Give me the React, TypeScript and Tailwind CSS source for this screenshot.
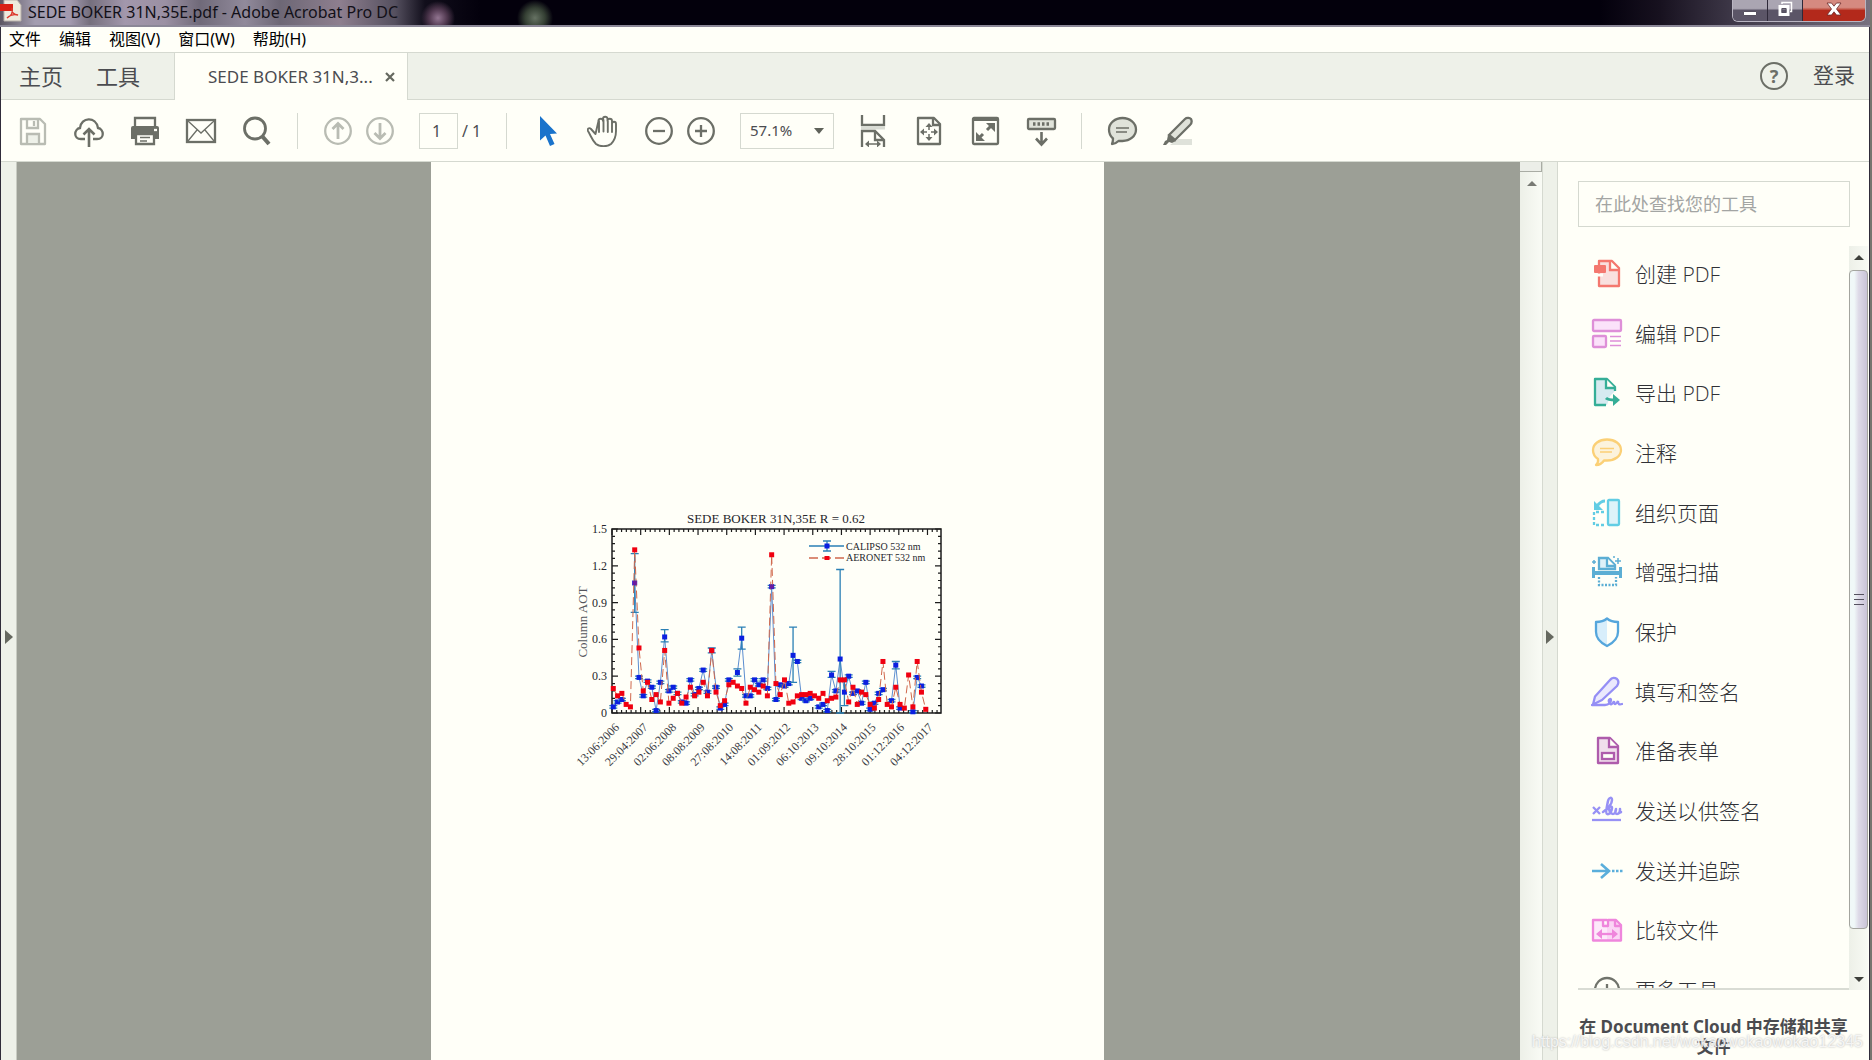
import type { ReactNode } from "react";

const MENUS = ["文件", "编辑", "视图(V)", "窗口(W)", "帮助(H)"];

function Icon({ children, className = "size-8" }: { children: ReactNode; className?: string }) {
  return (
    <svg viewBox="0 0 32 32" fill="none" stroke="currentColor" strokeWidth="2.300" className={`shrink-0 ${className}`} aria-hidden="true">
      {children}
    </svg>
  );
}

/* ---------- tool list ---------- */

const TOOLS = [
  {
    label: "创建 PDF",
    color: "text-[#f4786f]",
    icon: (
      <>
        <path d="M8 3h13l7 7v18H8z" fill="#f9e0de" strokeLinejoin="round" />
        <path d="M19 3v9h9" fill="#fffff8" />
        <path d="M6 17h6" stroke="#fffff8" strokeWidth="3" />
        <rect x="3" y="7" width="12" height="8" rx="1" fill="currentColor" stroke="none" />
      </>
    ),
  },
  {
    label: "编辑 PDF",
    color: "text-[#de8fd8]",
    icon: (
      <>
        <rect x="2" y="2" width="28" height="11" rx="1" fill="#fbe2fa" />
        <rect x="2" y="18" width="13" height="11" rx="1" fill="#fbe2fa" />
        <path d="M19 18.500h11M19 23h11M19 27.500h11" strokeWidth="1.300" />
      </>
    ),
  },
  {
    label: "导出 PDF",
    color: "text-[#35ae97]",
    icon: (
      <>
        <path d="M24 14v-4l-8-8H4v26h12l3-9z" fill="#d6eaf0" stroke="none" />
        <path d="M15 28H4V2h12l8 8v4" strokeLinejoin="round" />
        <path d="M15 2v9h9" fill="#fffff8" />
        <path d="M15 21c2 2 5 2 9 2" strokeWidth="3" />
        <path d="M22 17l7 6-7 6z" fill="currentColor" stroke="none" />
      </>
    ),
  },
  {
    label: "注释",
    color: "text-[#fbd076]",
    icon: (
      <>
        <path d="M16 2.500c8 0 14 4.500 14 10.500s-6 10.500-14 10.500h-3c-2 3-5 4.500-8 4.500 1.500-1.500 2.500-3.500 2-6C4 20 2 17 2 13 2 7 8 2.500 16 2.500z" fill="#fcf3dc" strokeLinejoin="round" />
        <path d="M9 11.500h14M9 15h12" strokeWidth="1.300" />
      </>
    ),
  },
  {
    label: "组织页面",
    color: "text-[#62cde4]",
    icon: (
      <>
        <rect x="17" y="3" width="11" height="25" rx="1" fill="#def3f9" />
        <path d="M13 15H3v13h11" strokeDasharray="3 2" />
        <path d="M14 4c-3 0-5 1-8 5" strokeWidth="3" />
        <path d="M3 4v9h9z" fill="currentColor" stroke="none" />
      </>
    ),
  },
  {
    label: "增强扫描",
    color: "text-[#5caed4]",
    icon: (
      <>
        <path d="M8 13V2h9l7 7v4z" fill="#dff1f8" />
        <path d="M16 2v8h8" fill="#fffff8" />
        <path d="M2.500 11v11M29.500 11v11" strokeWidth="3" />
        <path d="M2 17h28" strokeWidth="4" />
        <path d="M8 21v8h17v-8" strokeDasharray="2 1.500" />
        <path d="M1 6h4M3 4v4M24 5h6M27 2v6M22 1h2" strokeWidth="1.500" />
      </>
    ),
  },
  {
    label: "保护",
    color: "text-[#55a6dc]",
    icon: (
      <>
        <path d="M16 3C13 5 9 6 5 6v10c0 7 6 11 11 14z" fill="#d8eefb" stroke="none" />
        <path d="M16 2.500C13 5 9 6 5 6v10c0 6 5 11 11 14 6-3 11-8 11-14V6c-4 0-8-1-11-3.500z" strokeLinejoin="round" />
      </>
    ),
  },
  {
    label: "填写和签名",
    color: "text-[#958ff5]",
    icon: (
      <>
        <path d="M2 28.500l2-8L19 4c2-3 5-2.500 7-1 2 2 2 4 0 7L11 24z" fill="#ebe9fd" strokeLinejoin="round" />
        <path d="M1 29h13c4 0 6-3 6-5s-3-1-2 2c1 4 4 2 5-1 0 4 2 4 4 0 0 3 1 4 4 3" strokeLinecap="round" />
      </>
    ),
  },
  {
    label: "准备表单",
    color: "text-[#ae5cac]",
    icon: (
      <>
        <path d="M7 3h12l8 8v17H7z" fill="#f0dfec" strokeLinejoin="round" />
        <path d="M18 3v9h9" fill="#fffff8" />
        <rect x="11" y="18" width="12" height="6" fill="#fffff8" />
      </>
    ),
  },
  {
    label: "发送以供签名",
    color: "text-[#9791f5]",
    icon: (
      <>
        <path d="M2 12l7 7M9 12l-7 7" />
        <path
          d="M12 17c5-3 9-8 9-12 0-3-3-3-4 1-1 5-3 12-1 13s5-3 5-6c0-2-3-2-3 0 0 3 2 6 4 6s3-3 3-5c-1 3-1 5 1 5s3-2 3-5c0 3 0 4 1 3"
          strokeWidth="2.500"
          strokeLinecap="round"
          strokeLinejoin="round"
        />
        <path d="M1 25h29" />
      </>
    ),
  },
  {
    label: "发送并追踪",
    color: "text-[#5aaedb]",
    icon: (
      <>
        <path d="M1 16h17M10 9l8 7-8 7" strokeWidth="2.600" />
        <path d="M21 16h11" strokeDasharray="2.500 1.500" />
      </>
    ),
  },
  {
    label: "比较文件",
    color: "text-[#ef86dc]",
    icon: (
      <>
        <path d="M2 6h9l5 5v16H2z" fill="#fde9fa" stroke="none" />
        <path d="M16 6h8l6 6v15H16z" fill="#fbd5f5" stroke="none" />
        <path d="M2 6h10v6h5V6h8l5 5v15.500H2zM16 6h-4M24 6v6h6" strokeLinejoin="round" />
        <path d="M7 20h18" />
        <path d="M11 15l-6 5 6 5zM21 15l6 5-6 5z" fill="currentColor" stroke="none" />
      </>
    ),
  },
  {
    label: "更多工具",
    color: "text-[#70736b]",
    icon: (
      <>
        <circle cx="16" cy="16" r="12" />
        <path d="M16 10v12M10 16h12" />
      </>
    ),
  },
];

/* ---------- toolbar ---------- */

function ToolButton({ label, narrow, muted, children }: { label: string; narrow?: boolean; muted?: boolean; children: ReactNode }) {
  return (
    <button
      type="button"
      aria-label={label}
      className={`flex h-10 shrink-0 items-center justify-center ${narrow ? "w-[42px]" : "w-14"} ${muted ? "text-[#b9bcb3]" : "text-[#6c6f67]"}`}
    >
      <Icon>{children}</Icon>
    </button>
  );
}

function Divider() {
  return <div className="mx-3 h-9 w-px shrink-0 bg-[#d5d9d0]" />;
}

function Toolbar() {
  return (
    <div className="flex h-[62px] shrink-0 items-center border-b border-[#d5d9d0] pl-1">
      <ToolButton label="保存" muted>
        <path d="M4 4h19l5 5v20H4z" strokeLinejoin="round" />
        <path d="M10 4v9h11V4M17 6v5" />
        <path d="M10 28V19h12v9" fill="#eef1e9" />
      </ToolButton>
      <ToolButton label="上传">
        <path d="M12 24H8c-8 0-7-10-1-11C8 2 23 1 25 13c6 1 7 11-1 11h-4" />
        <path d="M16 32V15M10.500 19.500L16 14l5.500 5.500" strokeWidth="2.600" />
      </ToolButton>
      <ToolButton label="打印">
        <path d="M6 11V3h20v8" />
        <path d="M4 11h24a2 2 0 0 1 2 2v11H2V13a2 2 0 0 1 2-2z" fill="currentColor" stroke="none" />
        <path d="M7 19h18v10H7z" fill="#fffff8" />
        <path d="M11 22.500h10M11 26h7" strokeWidth="1.500" />
        <path d="M25 15h3" stroke="#fffff8" />
      </ToolButton>
      <ToolButton label="电子邮件">
        <rect x="2" y="5" width="28" height="22" />
        <path d="M3 6l13 12L29 6M3 26l9-11M29 26l-9-11" strokeWidth="1.300" />
      </ToolButton>
      <ToolButton label="查找">
        <circle cx="14" cy="13.500" r="10.500" strokeWidth="2.800" />
        <path d="M21 21l7 8" strokeWidth="4" />
      </ToolButton>
      <Divider />
      <div className="flex pl-[7px]">
        <ToolButton label="上一页" narrow muted>
          <circle cx="16" cy="16" r="12.800" />
          <path d="M16 24V9M10.500 14L16 8.500l5.500 5.500" strokeWidth="2.800" />
        </ToolButton>
        <ToolButton label="下一页" narrow muted>
          <circle cx="16" cy="16" r="12.800" />
          <path d="M16 8v15M10.500 18l5.500 5.500 5.500-5.500" strokeWidth="2.800" />
        </ToolButton>
      </div>
      <input
        aria-label="页码"
        defaultValue="1"
        className="ml-[18px] h-9 w-[39px] shrink-0 border border-[#d5d9d0] bg-transparent pr-1 text-center text-base text-[#4b4c50] outline-none"
      />
      <span className="w-9 shrink-0 pl-1 text-base">/ 1</span>
      <Divider />
      <button type="button" aria-label="选择" className="flex h-10 w-14 shrink-0 items-center justify-center text-[#1a73cb]">
        <Icon>
          <path d="M9 1v24.500l5.500-5 4.500 10.500 4.500-2-4.500-10 7-.500z" fill="currentColor" stroke="none" />
        </Icon>
      </button>
      <ToolButton label="手形工具">
        <path
          d="M8.500 19L4 14c-2-2-4 0-3 2 3 5 4 9 8 13 4 3 11 3 15 0 4-4 5-8 5-13V9c0-3-4-3-4 0V6c0-3-4.500-3-4.500 0V4c0-3-4.500-3-4.500 0v2c0-3-4.500-3-4.500 0zM12 6v11M16.500 5v11.500M20.800 6v11M25 9v8"
          strokeWidth="1.900"
          strokeLinejoin="round"
          strokeLinecap="round"
        />
      </ToolButton>
      <div className="flex pl-[7px]">
        <ToolButton label="缩小" narrow>
          <circle cx="16" cy="16" r="12.800" />
          <path d="M10 16h12" />
        </ToolButton>
        <ToolButton label="放大" narrow>
          <circle cx="16" cy="16" r="12.800" />
          <path d="M10 16h12M16 10v12" />
        </ToolButton>
      </div>
      <div className="relative ml-[18px] shrink-0">
        <select
          aria-label="缩放比例"
          className="h-9 w-[94px] appearance-none border border-[#d5d9d0] bg-transparent pl-[9px] text-[15px] text-[#4b4c50] outline-none"
        >
          <option>57.1%</option>
        </select>
        <svg viewBox="0 0 10 6" className="pointer-events-none absolute top-[15px] right-[10px] h-1.5 w-2.5 fill-[#5f625a]" aria-hidden="true">
          <path d="M0 0h10L5 6z" />
        </svg>
      </div>
      <div className="flex pl-[11px]">
        <ToolButton label="适合宽度">
          <path d="M5 0v10h22V0" />
          <path d="M4 13h24" stroke="#d9dcd4" strokeWidth="3" />
          <path d="M5 33V16h13l9 9v8" />
          <path d="M18 16v9h9" />
          <path d="M10 29h12" strokeWidth="1.500" />
          <path d="M12 25.500L8 29l4 3.500zM20 25.500l4 3.500-4 3.500z" fill="currentColor" stroke="none" />
        </ToolButton>
        <ToolButton label="适合页面">
          <path d="M5 3h16l6 6v20H5z" strokeLinejoin="round" />
          <path d="M20 3v7h7" />
          <path d="M16 10v5M16 19v5M9 17h5M18 17h5" strokeWidth="1.500" />
          <path d="M16 8l-3.500 4h7zM16 26l-3.500-4h7zM7 17l4-3.500v7zM25 17l-4-3.500v7z" fill="currentColor" stroke="none" />
        </ToolButton>
        <ToolButton label="全屏">
          <rect x="4" y="3" width="25" height="26" rx="1" />
          <path d="M4 4.500h25" strokeWidth="3" />
          <path d="M18 15l6-6M14 19l-6 6" strokeWidth="3" />
          <path d="M17 8h9v9zM7 17v9h9z" fill="currentColor" stroke="none" />
        </ToolButton>
        <ToolButton label="阅读模式">
          <rect x="3" y="4" width="27" height="10" rx="1" fill="#e0e3da" />
          <path d="M8 9h17" strokeWidth="3.500" strokeDasharray="2.500 2" />
          <path d="M16.500 17v12M11 23.500l5.500 6 5.500-6" strokeWidth="2.600" />
        </ToolButton>
      </div>
      <Divider />
      <ToolButton label="添加附注">
        <path d="M16.500 3C24 3 30 8 30 14.500S24 26 16.500 26c-1.500 0-3 0-4 0-2 2-4 3-6.500 3 1-2 1-3.500 1-5.500C4 21 3 18 3 14.500 3 8 9 3 16.500 3z" fill="#e0e3da" strokeLinejoin="round" />
        <path d="M10 13h13M10 17h11" strokeWidth="1.500" />
      </ToolButton>
      <ToolButton label="高亮文本">
        <path d="M8 30l8-6h14v6z" fill="#dfe2da" stroke="none" />
        <path d="M7 20L23 4c2-2 5-1 6 0 1 2 1 4-1 6L13 25z" fill="#e0e3da" />
        <path d="M6 20l8 6-4 2-3-1-3 3H1l2-4 2-1z" fill="currentColor" stroke="none" />
      </ToolButton>
    </div>
  );
}

/* ---------- chart ---------- */

const AERONET = [
  0.2, 0.14, 0.16, 0.07, 0.05, 1.33, 0.53, 0.18, 0.25, 0.11, 0.15, 0.09, 0.51, 0.08, 0.12, 0.16, 0.08, 0.13, 0.21, 0.14,
  0.17, 0.25, 0.14, 0.51, 0.17, 0.06, 0.1, 0.23, 0.25, 0.22, 0.2, 0.08, 0.21, 0.19, 0.17, 0.22, 0.14, 1.29, 0.24, 0.15,
  0.27, 0.08, 0.09, 0.14, 0.15, 0.15, 0.16, 0.14, 0.12, 0.16, 0.1, 0.12, 0.13, 0.27, 0.27, 0.09, 0.21, 0.07, 0.17, 0.15,
  0.07, 0.04, 0.11, 0.42, 0.07, 0.05, 0.21, 0.07, 0.04, 0.31, 0.05, 0.42, 0.17, 0.03,
];

const CALIPSO: (number | null)[] = [
  0.05, 0.09, 0.11, null, null, 1.06, 0.29, 0.14, 0.26, 0.21, 0.02, 0.25, 0.62, 0.18, 0.21, 0.16, 0.09, 0.08, 0.27, 0.15,
  0.2, 0.35, 0.17, 0.51, 0.21, 0.04, 0.07, 0.27, null, 0.33, 0.61, 0.14, 0.14, 0.27, 0.23, 0.27, 0.2, 1.03, 0.11, 0.23,
  0.22, 0.24, 0.47, 0.42, 0.12, 0.1, 0.12, null, 0.05, 0.07, 0.02, 0.31, 0.18, 0.44, 0.17, 0.3, 0.16, 0.18, 0.08, 0.25,
  0.03, 0.08, 0.16, 0.19, null, 0.1, 0.39, 0.04, null, null, 0.01, 0.29, 0.22,
];

// index -> [low, high]
const ERRORS: Record<number, [number, number]> = {
  5: [0.82, 1.3],
  12: [0.58, 0.68],
  23: [0.49, 0.53],
  29: [0.3, 0.36],
  30: [0.52, 0.7],
  42: [0.25, 0.7],
  51: [0.29, 0.34],
  53: [0, 1.17],
  54: [0.06, 0.27],
  66: [0.36, 0.42],
};

const DATES = [
  "13:06:2006", "29:04:2007", "02:06:2008", "08:08:2009", "27:08:2010", "14:08:2011",
  "01:09:2012", "06:10:2013", "09:10:2014", "28:10:2015", "01:12:2016", "04:12:2017",
];

const LEFT = 42;
const RIGHT = 371;
const TOP = 29;
const BOTTOM = 213;

const px = (i: number) => 43.3 + i * 4.28;
const py = (v: number) => BOTTOM - (v / 1.5) * (BOTTOM - TOP);

function linePath(values: (number | null)[]) {
  let d = "";
  let pen = "M";
  values.forEach((v, i) => {
    if (v === null) {
      pen = "M";
      return;
    }
    d += `${pen}${px(i)} ${py(v)}`;
    pen = "L";
  });
  return d;
}

function Chart() {
  return (
    <svg viewBox="0 0 395 270" className="w-[395px] font-['Liberation_Serif',serif]" fill="#26262c" role="img" aria-label="SEDE BOKER 31N,35E R = 0.62">
      <text x="206" y="23" fontSize="13" textAnchor="middle">SEDE BOKER 31N,35E R = 0.62</text>
      <text transform="translate(17 122) rotate(-90)" fontSize="13" textAnchor="middle" fill="#55565c">Column AOT</text>

      {/* axes */}
      <rect x={LEFT} y={TOP} width={RIGHT - LEFT} height={BOTTOM - TOP} fill="none" stroke="#1c1c1c" strokeWidth="1.500" />
      <g stroke="#1c1c1c" strokeWidth="1.200">
        {Array.from({ length: 69 }, (_, i) => {
          const x = LEFT + i * 4.78;
          const len = i % 6 === 0 ? 6 : 3;
          return <path key={i} d={`M${x} ${TOP}v${len}M${x} ${BOTTOM}v${-len}`} />;
        })}
        {Array.from({ length: 26 }, (_, i) => {
          const y = BOTTOM - i * 7.36;
          const len = i % 5 === 0 ? 6 : 3;
          return <path key={i} d={`M${LEFT} ${y}h${len}M${RIGHT} ${y}h${-len}`} />;
        })}
      </g>
      {["0", "0.3", "0.6", "0.9", "1.2", "1.5"].map((t, i) => (
        <text key={t} x="37" y={BOTTOM - i * 36.8 + 4} fontSize="12" textAnchor="end">{t}</text>
      ))}
      {DATES.map((t, i) => (
        <text key={t} transform={`translate(${50 + i * 28.5} 228) rotate(-45)`} fontSize="12" textAnchor="end" fill="#3c3d45">{t}</text>
      ))}

      {/* CALIPSO */}
      <path d={linePath(CALIPSO)} fill="none" stroke="#5c8ed0" strokeWidth="1" />
      {CALIPSO.map((v, i) => {
        if (v === null) return null;
        const [lo, hi] = ERRORS[i] ?? [v - 0.01, v + 0.01];
        const x = px(i);
        return (
          <g key={i}>
            <path d={`M${x} ${py(lo)}V${py(hi)}M${x - 4} ${py(lo)}h8M${x - 4} ${py(hi)}h8`} stroke="#2b80b5" strokeWidth="1.300" />
            <rect x={x - 2.5} y={py(v) - 2.5} width="5" height="5" fill="#0b1fe0" />
          </g>
        );
      })}

      {/* AERONET */}
      <path d={linePath(AERONET)} fill="none" stroke="#d0684c" strokeWidth="1" strokeDasharray="8 4" />
      {AERONET.map((v, i) => (
        <rect key={i} x={px(i) - 2.5} y={py(v) - 2.5} width="5" height="5" fill="#f00010" />
      ))}
      <rect x={px(5) - 2} y={py(1.06) - 2} width="4" height="4" fill="#6a1aa0" />
      <rect x={px(37) - 2} y={py(1.03) - 2} width="4" height="4" fill="#6a1aa0" />

      {/* legend */}
      <path d="M239 46h35M257 41v10M253 41h8M253 51h8" stroke="#2b80b5" strokeWidth="1.300" />
      <rect x="254.500" y="43.500" width="5" height="5" fill="#0b1fe0" />
      <path d="M239 58h35" stroke="#d0684c" strokeWidth="1.300" strokeDasharray="9 4" />
      <rect x="254.500" y="56" width="5" height="4" fill="#f00010" />
      <text x="276" y="50" fontSize="10">CALIPSO 532 nm</text>
      <text x="276" y="61" fontSize="10">AERONET 532 nm</text>
    </svg>
  );
}

/* ---------- window ---------- */

function TitleBar() {
  return (
    <header className="flex h-[27px] shrink-0 items-start overflow-hidden border-b-2 border-[#8b8797] bg-[radial-gradient(circle_at_438px_18px,#927591_0px,#50384f_9px,transparent_17px),radial-gradient(circle_at_535px_18px,#667263_0px,#354034_10px,transparent_18px),linear-gradient(to_right,#5d5763_0px,#a39daf_35px,#a39aaf_70px,#756f7d_90px,#a297ac_125px,#9b90a3_165px,#706a79_200px,#918a9b_245px,#6d6775_280px,#8e7f8f_340px,#55505f_395px,#110e1b_425px,#03000c_480px,#03000c_1600px,#17111f_1660px,#3c3646_1730px,#77717f_1872px)]">
      <svg viewBox="0 0 22 22" className="h-[22px] w-[22px] shrink-0" aria-hidden="true">
        <path d="M4 0h13l4 5v16H4z" fill="#eeeade" stroke="#b8b1aa" />
        <path d="M0 4h13v7H0z" fill="#d92116" />
        <path d="M7 18c4-2 6-6 5-10-1 4 2 7 6 7-4-1-8 0-11 3z" fill="none" stroke="#dc392e" strokeWidth="1.300" />
      </svg>
      <h1 className="pl-[6px] text-base leading-6 text-[#121018]">SEDE BOKER 31N,35E.pdf - Adobe Acrobat Pro DC</h1>
      <div className="mr-1 ml-auto flex h-[22px] overflow-hidden rounded-b-md border border-t-0 border-[#b9b5c2]">
        <button type="button" aria-label="最小化" className="flex w-[35px] items-center justify-center border-r border-[#2e2939] bg-gradient-to-b from-[#aaa5b2] from-40% to-[#5b5567] to-50%">
          <svg viewBox="0 0 14 14" className="size-3.5" aria-hidden="true">
            <path d="M.500 7.500h13v4H.500z" fill="#fff" stroke="#56505f" />
          </svg>
        </button>
        <button type="button" aria-label="还原" className="flex w-[35px] items-center justify-center border-r border-[#2e2939] bg-gradient-to-b from-[#aaa5b2] from-40% to-[#5b5567] to-50% pb-1">
          <svg viewBox="0 0 16 16" className="size-4" fill="none" aria-hidden="true">
            <path d="M5 3V1.500h9.500v9H13" stroke="#fff" strokeWidth="1.500" />
            <path d="M3 5.500h8v8H3z" stroke="#fff" strokeWidth="3" />
            <path d="M5 7.500h4v4H5z" stroke="#56505f" />
          </svg>
        </button>
        <button type="button" aria-label="关闭" className="flex w-[62px] items-center justify-center bg-gradient-to-b from-[#d58a80] from-35% to-[#b3291b] to-50% pb-1">
          <svg viewBox="0 0 16 14" className="h-3.5 w-4" aria-hidden="true">
            <path d="M1 1h4.500L8 4.200 10.500 1H15l-4.500 6 4.500 6h-4.500L8 9.800 5.500 13H1l4.500-6z" fill="#fff" stroke="#6b2a2a" strokeWidth=".800" />
          </svg>
        </button>
      </div>
    </header>
  );
}

function ToolsPane() {
  return (
    <aside className="flex w-[311px] shrink-0 flex-col">
      <input
        type="search"
        aria-label="查找工具"
        placeholder="在此处查找您的工具"
        className="mt-[19px] mr-[19px] mb-[19px] ml-5 h-[46px] shrink-0 border border-[#d5d9d0] bg-transparent px-4 text-lg outline-none placeholder:text-[#a3a5a3]"
      />
      <div className="ml-5 flex h-[744px] shrink-0">
        <nav className="flex-1 overflow-hidden border-b-2 border-[#d9dcd4]">
          <ul className="-mt-0.5 flex h-[776px] flex-col">
            {TOOLS.map((tool) => (
              <li key={tool.label} className="flex-1">
                <button type="button" className="flex h-full w-full items-center gap-3 pl-[13px] text-left">
                  <span className={tool.color}>
                    <Icon>{tool.icon}</Icon>
                  </span>
                  <span className="font-['Open_Sans','Noto_Sans_CJK_SC',sans-serif] text-[21px] leading-8 font-light text-[#303136]">{tool.label}</span>
                </button>
              </li>
            ))}
          </ul>
        </nav>
        {/* list scroll bar */}
        <div className="mr-px flex w-[19px] flex-col bg-gradient-to-r from-[#edf0e8] to-[#f8faf4]">
          <svg viewBox="0 0 19 24" className="h-6 w-[19px]" aria-hidden="true">
            <path d="M5 14l5-5 5 5z" fill="#3d3f3a" />
          </svg>
          <div className="flex flex-1 items-center justify-center rounded-sm border border-[#a4a59f] bg-gradient-to-r from-[#f0f8f8] from-25% via-[#dedbe8] via-50% to-[#c9c3d7]">
            <div className="flex h-[11px] w-2.5 flex-col justify-between">
              <div className="h-px bg-[#55525f]" />
              <div className="h-px bg-[#55525f]" />
              <div className="h-px bg-[#55525f]" />
            </div>
          </div>
          <svg viewBox="0 0 19 61" className="h-[61px] w-[19px]" aria-hidden="true">
            <path d="M5 48h10l-5 5z" fill="#3d3f3a" />
          </svg>
        </div>
      </div>
      <p className="mt-[27px] px-5 text-center text-[17px] leading-5 font-bold text-[#4a4b4f]">在 Document Cloud 中存储和共享文件</p>
    </aside>
  );
}

export default function App() {
  return (
    <div className="relative flex h-screen flex-col overflow-hidden border-r-2 border-[#77756f] bg-[#fffff8] font-['Noto_Sans','Noto_Sans_CJK_SC',sans-serif] text-[#4b4c50]">
      <TitleBar />
      <div className="flex min-h-0 flex-1 flex-col border-x border-[#302c3a]">
        <nav className="flex h-[25px] shrink-0 items-center gap-[18px] pb-0.5 pl-2 text-base leading-6 text-black">
          {MENUS.map((m) => (
            <button type="button" key={m}>{m}</button>
          ))}
        </nav>

        <div className="flex h-12 shrink-0 items-stretch border-y border-[#d5d9d0] bg-[#eef1e9]">
          <button type="button" className="pl-[18px] text-[22px]">主页</button>
          <button type="button" className="pr-[34px] pl-[33px] text-[22px]">工具</button>
          <div className="-mb-px flex w-[234px] items-center border-x border-[#d5d9d0] bg-[#fffff8] pl-[33px]">
            <span className="text-[17px] whitespace-nowrap">SEDE BOKER 31N,3...</span>
            <button type="button" aria-label="关闭标签" className="mr-3 ml-auto">
              <svg viewBox="0 0 10 10" className="size-2.5" aria-hidden="true">
                <path d="M1 1l8 8M9 1L1 9" stroke="#65685f" strokeWidth="2.200" />
              </svg>
            </button>
          </div>
          <div className="ml-auto flex items-center gap-[25px] pr-3.5">
            <button type="button" aria-label="帮助" className="flex size-7 items-center justify-center rounded-full border-2 border-[#6c6f67] text-lg leading-none font-bold text-[#6c6f67]">
              ?
            </button>
            <button type="button" className="text-[21px]">登录</button>
          </div>
        </div>

        <Toolbar />

        <main className="flex min-h-0 flex-1">
          <button type="button" aria-label="展开导航窗格" className="flex w-4 shrink-0 items-center border-r border-[#c9ccc3] bg-[#eef1e9] pt-[52px] pl-1">
            <svg viewBox="0 0 8 14" className="h-3.5 w-2" aria-hidden="true">
              <path d="M0 0l8 7-8 7z" fill="#65685f" />
            </svg>
          </button>
          <div className="flex flex-1 justify-center bg-[#9c9f96] pr-0.5">
            <article className="flex w-[673px] flex-col items-center bg-[#fffff8] pt-[338px]">
              <Chart />
            </article>
          </div>
          <div className="w-[23px] shrink-0 border-r border-[#d5d9d0] bg-gradient-to-r from-[#edf0e8] to-[#f9fbf5]">
            <div className="h-2.5 border-r border-b border-[#a9aca4] bg-[#eceee8]" />
            <svg viewBox="0 0 22 24" className="h-6 w-[22px]" aria-hidden="true">
              <path d="M7 14l5-5 5 5z" fill="#787a74" />
            </svg>
          </div>
          <button type="button" aria-label="折叠工具窗格" className="flex w-[15px] shrink-0 items-center border-r border-[#d5d9d0] bg-[#eef1e9] pt-[52px] pl-[3px]">
            <svg viewBox="0 0 8 14" className="h-3.5 w-2" aria-hidden="true">
              <path d="M0 0l8 7-8 7z" fill="#65685f" />
            </svg>
          </button>
          <ToolsPane />
        </main>
      </div>
      <span className="pointer-events-none absolute right-[7px] bottom-1.5 font-['Liberation_Sans',sans-serif] text-base text-white/80 [text-shadow:0_0_2px_#aaa]">
        https://blog.csdn.net/wokaowokaowokao12345
      </span>
    </div>
  );
}
